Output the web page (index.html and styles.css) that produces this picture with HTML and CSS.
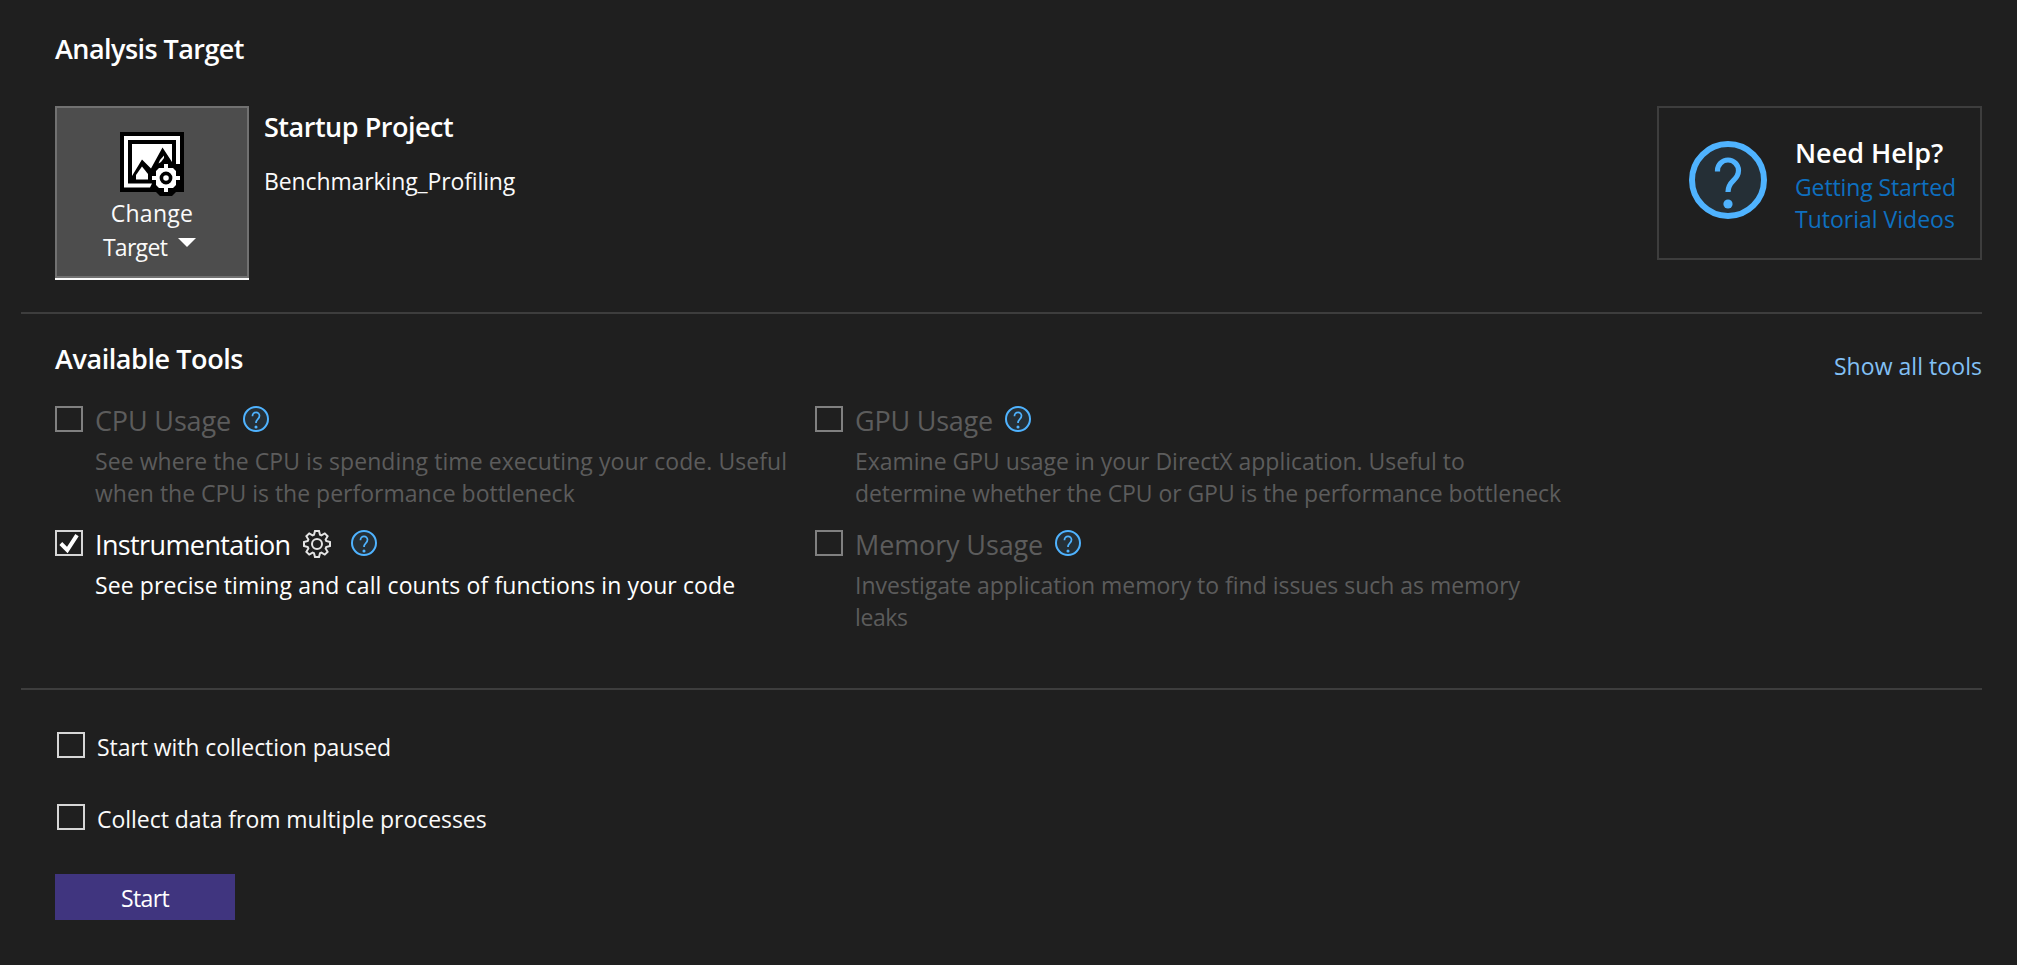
FILE: index.html
```html
<!DOCTYPE html>
<html lang="en">
<head>
<meta charset="utf-8">
<title>Analysis Target</title>
<link rel="stylesheet" href="styles.css">
</head>
<body>
<svg class="defs" width="0" height="0" aria-hidden="true">
  <symbol id="help" viewBox="0 0 78 78">
    <circle cx="39" cy="39" r="36" fill="#252f36" stroke="#4fb3ff" stroke-width="6"/>
    <path d="M28.5 30.5V29.5a10.5 10.5 0 0 1 21 0C49.5 40 39 39 39 51" fill="none" stroke="#4fb3ff" stroke-width="5.2"/>
    <circle cx="39" cy="63" r="4.6" fill="#4fb3ff"/>
  </symbol>
</svg>
<main class="page">
  <section class="target">
    <h2 class="heading h-analysis">Analysis Target</h2>
    <div class="target-row">
      <button class="change">
        <svg class="change-icon" viewBox="0 0 64 64">
          <path d="M0 0H64V60H56L52 64H40L36 60H0Z" fill="#000"/>
          <path d="M60 32V4H4V55.5H30L32 51.5H8V8H56V32Z" fill="#fff"/>
          <path d="M12 12H52V30L42.5 15.5L31 36.5L22 27.5L12 44Z" fill="#fff"/>
          <path d="M22 34.5L28 42V47.5H16V43Z" fill="#fff"/>
          <path d="M38.5 31.5L40 28L44 23.5V26L41 30Z" fill="#fff"/>
          <path d="M44 32h4v4h5l3 3v5h4v4h-4v5l-3 3h-5v4h-4v-4h-5l-3-3v-5h-4v-4h4v-5l3-3h5z" fill="#fff"/>
          <circle cx="46" cy="46" r="4.6" fill="#fff" stroke="#000" stroke-width="3.6"/>
        </svg>
        <span class="change-line l-change">Change</span>
        <span class="change-line change-second"><span class="l-target">Target</span><svg class="arrow" viewBox="0 0 18 9"><path d="M0 0H18L9 9Z" fill="#fff"/></svg></span>
      </button>
      <div class="project">
        <h2 class="heading h-startup">Startup Project</h2>
        <p class="text l-project">Benchmarking_Profiling</p>
      </div>
      <aside class="help-box">
        <svg class="help-large"><use href="#help"/></svg>
        <div class="help-links">
          <h2 class="heading h-help">Need Help?</h2>
          <a class="text l-getting">Getting Started</a>
          <a class="text l-tutorial">Tutorial Videos</a>
        </div>
      </aside>
    </div>
  </section>
  <section class="tools">
    <div class="tools-head">
      <h2 class="heading h-tools">Available Tools</h2>
      <a class="text show-all">Show all tools</a>
    </div>
    <div class="grid">
      <article class="tool off">
        <span class="box"></span>
        <div class="tool-body">
          <div class="tool-name"><span class="n-cpu">CPU Usage</span><svg class="help-small"><use href="#help"/></svg></div>
          <p class="text"><span class="d-cpu1">See where the CPU is spending time executing your code. Useful</span><br>when the CPU is the performance bottleneck</p>
        </div>
      </article>
      <article class="tool off">
        <span class="box"></span>
        <div class="tool-body">
          <div class="tool-name"><span class="n-gpu">GPU Usage</span><svg class="help-small"><use href="#help"/></svg></div>
          <p class="text"><span class="d-gpu1">Examine GPU usage in your DirectX application. Useful to</span><br><span class="d-gpu2">determine whether the CPU or GPU is the performance bottleneck</span></p>
        </div>
      </article>
      <article class="tool">
        <span class="box"><svg class="check" viewBox="0 0 24 22"><path d="M3.8 11.5L10.3 18L20 3.2" fill="none" stroke="#fff" stroke-width="4"/></svg></span>
        <div class="tool-body">
          <div class="tool-name"><span class="n-inst">Instrumentation</span><svg class="gear" viewBox="-14 -14 28 28"><path d="M-3-9.2L-2-13 2-13 3-9.2 4.38-8.63 7.78-10.61 10.61-7.78 8.63-4.38 9.2-3 13-2 13 2 9.2 3 8.63 4.38 10.61 7.78 7.78 10.61 4.38 8.63 3 9.2 2 13-2 13-3 9.2-4.38 8.63-7.78 10.61-10.61 7.78-8.63 4.38-9.2 3-13 2-13-2-9.2-3-8.63-4.38-10.61-7.78-7.78-10.61-4.38-8.63Z"/><circle r="5"/></svg><svg class="help-small"><use href="#help"/></svg></div>
          <p class="text"><span class="d-inst">See precise timing and call counts of functions in your code</span></p>
        </div>
      </article>
      <article class="tool off">
        <span class="box"></span>
        <div class="tool-body">
          <div class="tool-name"><span class="n-mem">Memory Usage</span><svg class="help-small"><use href="#help"/></svg></div>
          <p class="text"><span class="d-gpu1">Investigate application memory to find issues such as memory</span><br><span class="d-leaks">leaks</span></p>
        </div>
      </article>
    </div>
  </section>
  <section class="options">
    <label class="option"><span class="box"></span><span class="text l-paused">Start with collection paused</span></label>
    <label class="option"><span class="box"></span><span class="text l-collect">Collect data from multiple processes</span></label>
    <button class="start">Start</button>
  </section>
</main>
</body>
</html>
```
FILE: styles.css
```css
* { box-sizing: border-box; }
body {
  margin: 0;
  background: #1f1f1f;
  color: #fafafa;
  font-family: "Open Sans", "Noto Sans", sans-serif;
  font-size: 23px;
  line-height: 32px;
}
h2, p { margin: 0; }
svg { display: block; flex: none; }
.defs { position: absolute; }
button { font: inherit; color: inherit; }
.page { padding: 0 35px 0 21px; height: 965px; overflow: hidden; }
section { padding-left: 34px; }

.heading {
  font-size: 27px;
  font-weight: 600;
  line-height: 36px;
  color: #fff;
  white-space: nowrap;
}
.text {
  font-size: 23px;
  line-height: 32px;
  white-space: nowrap;
}
.h-analysis { letter-spacing: -0.55px; }
.h-startup { letter-spacing: -0.48px; }
.h-help { letter-spacing: -0.03px; }
.h-tools { letter-spacing: -0.43px; }

/* Analysis target */
.target { height: 312px; padding-top: 31px; }
.target-row { display: flex; align-items: flex-start; margin-top: 39px; }
.change {
  width: 194px;
  height: 172px;
  margin: 0;
  padding: 24px 0 0;
  display: flex;
  flex-direction: column;
  align-items: center;
  background: #4d4d4d;
  border: 2px solid #717171;
  border-radius: 0;
  box-shadow: 0 2px 0 #fafafa;
}
.change-icon { width: 64px; height: 64px; }
.change-line { line-height: 34px; }
.change-second { display: flex; padding-right: 5px; }
.arrow { width: 18px; height: 9px; margin: 8px 0 0 11px; }
.l-change { letter-spacing: 0.3px; }
.l-target { letter-spacing: -0.7px; }
.project { padding: 3px 0 0 15px; }
.project .text { margin-top: 20px; }
.l-project { letter-spacing: -0.12px; }
.help-box {
  width: 325px;
  height: 154px;
  margin-left: auto;
  padding-left: 30px;
  display: flex;
  border: 2px solid #3d3d3d;
}
.help-large { width: 78px; height: 78px; margin-top: 33px; }
.help-links { display: flex; flex-direction: column; padding: 27px 0 0 28px; }
.help-links a { color: #0e70c0; }
.l-getting { letter-spacing: -0.11px; }

/* Available tools */
.tools { height: 376px; border-top: 2px solid #3d3d3d; padding-top: 27px; }
.tools-head { display: flex; justify-content: space-between; }
.show-all { padding-top: 9px; color: #82c0f5; letter-spacing: 0.05px; }
.grid {
  display: grid;
  grid-template-columns: 760px 760px;
  grid-auto-rows: 124px;
  padding-top: 21px;
}
.tool { display: flex; align-items: flex-start; }
.tool .box { margin: 3px 12px 0 0; }
.box {
  width: 28px;
  height: 26px;
  flex: none;
  border: 2px solid #d6d6d6;
}
.check { width: 24px; height: 22px; }
.off { color: #5c5c5c; }
.off .box { border-color: #808080; }
.tool-name { display: flex; font-size: 27px; line-height: 36px; margin-bottom: 6px; }
.help-small { width: 26px; height: 26px; margin: 3px 0 0 12px; }
.gear { width: 28px; height: 28px; margin: 3px 8px 0 13px; fill: none; stroke: #e4e4e4; stroke-width: 2; }
.n-cpu { letter-spacing: -0.15px; }
.n-gpu { letter-spacing: -0.22px; }
.n-inst { letter-spacing: -0.62px; color: #fff; }
.n-mem { letter-spacing: -0.13px; }
.d-cpu1 { letter-spacing: 0.07px; }
.d-gpu1 { letter-spacing: -0.02px; }
.d-gpu2 { letter-spacing: -0.07px; }
.d-inst { letter-spacing: 0.11px; color: #fff; }
.d-leaks { letter-spacing: -0.4px; }

/* Collection options */
.options { border-top: 2px solid #3d3d3d; padding-top: 41px; }
.option { display: flex; height: 32px; margin: 0 0 40px 2px; }
.option .box { margin: 1px 12px 0 0; }
.l-paused { letter-spacing: -0.08px; }
.l-collect { letter-spacing: -0.04px; }
.start {
  display: block;
  width: 180px;
  height: 46px;
  margin-top: -1px;
  padding: 1px 0 0;
  border: 0;
  background: #40357f;
  color: #fff;
  line-height: 32px;
  letter-spacing: -0.6px;
}
```
